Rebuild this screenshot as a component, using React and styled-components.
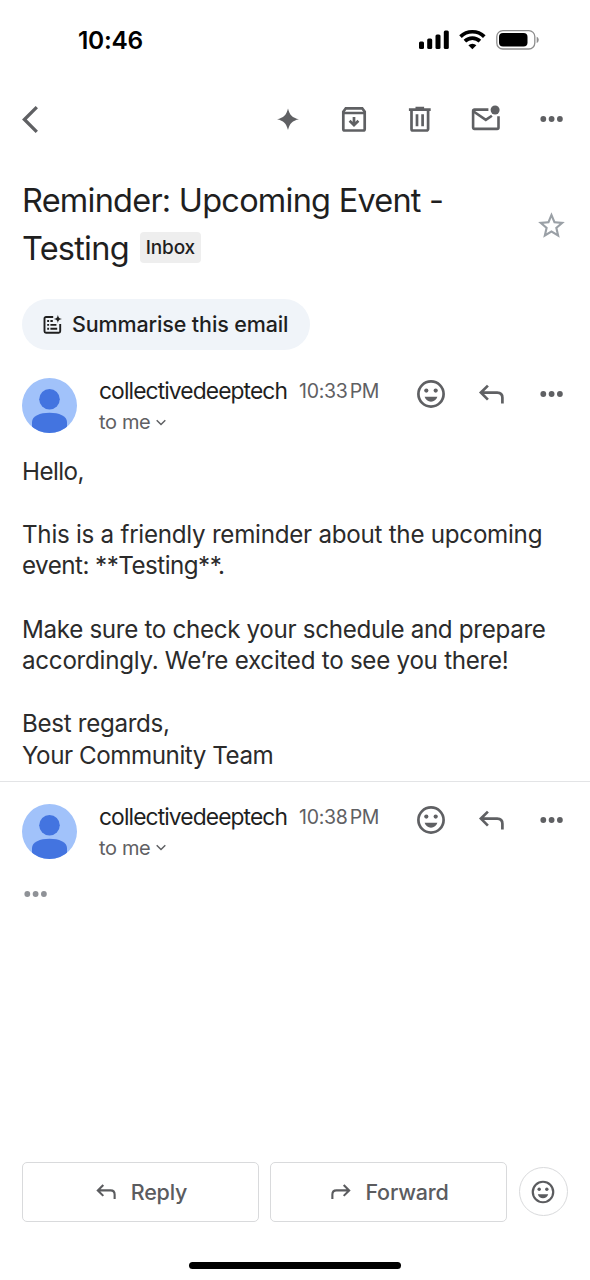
import styled, { createGlobalStyle } from "styled-components"

const GlobalStyle = createGlobalStyle`
    *, *::before, *::after {
        box-sizing: border-box;
    }
    body {
        margin: 0;
        background-color: #ffffff;
        font-family: Inter, "Liberation Sans", sans-serif;
    }
    svg {
        display: block;
        flex-shrink: 0;
    }
    p, h1 {
        margin: 0;
    }
`;
const Screen = styled.div`
    width: 590px;
    height: 1280px;
    display: flex;
    flex-direction: column;
    overflow: hidden;
    background-color: #ffffff;
    color: #1f1f1f;
`;
const StatusBar = styled.header`
    height: 80px;
    padding: 0 50px 0 78px;
    display: flex;
    align-items: center;
    justify-content: space-between;
`;
const Clock = styled.span`
    font-size: 24.5px;
    font-weight: 600;
    letter-spacing: -0.3px;
    color: #000000;
`;
const StatusIcons = styled.div`
    display: flex;
    align-items: center;
`;
const Toolbar = styled.nav`
    height: 78px;
    padding: 0 22px 0 14px;
    display: flex;
    align-items: center;
    justify-content: space-between;
`;
const ToolbarActions = styled.div`
    display: flex;
    gap: 34px;
`;
const IconButton = styled.button`
    width: 32px;
    height: 32px;
    padding: 0;
    border: none;
    background: none;
    color: ${(props) => props.$color || "#5f6063"};
    display: flex;
    align-items: center;
    justify-content: center;
`;
const SubjectRow = styled.div`
    margin-top: 19px;
    padding: 0 22px;
    height: 96px;
    display: flex;
    justify-content: space-between;
    align-items: center;
`;
const Subject = styled.h1`
    width: 450px;
    font-size: 32.5px;
    line-height: 48px;
    font-weight: 400;
    letter-spacing: -0.77px;
    color: #1f1f1f;
`;
const SubjectLine = styled.span`
    display: flex;
    align-items: center;
    white-space: nowrap;
`;
const Label = styled.span`
    height: 31px;
    margin: -3px 0 0 11px;
    padding: 0 6px;
    border-radius: 4px;
    background-color: #eeeeee;
    font-size: 19px;
    line-height: 31px;
    font-weight: 450;
    letter-spacing: -0.15px;
`;
const Chip = styled.button`
    width: 288px;
    height: 51px;
    margin: 26px 0 0 22px;
    padding: 0 0 1px 20px;
    border: none;
    border-radius: 26px;
    background-color: #f0f4f9;
    color: #1f1f1f;
    display: flex;
    align-items: center;
    gap: 9px;
    font-family: inherit;
    font-size: 21.5px;
    line-height: 26px;
    font-weight: 500;
    letter-spacing: -0.13px;
    white-space: nowrap;
`;
const MessageHeader = styled.div`
    height: 55px;
    margin-top: ${(props) => props.$top}px;
    padding: 0 22px;
    display: flex;
`;
const Sender = styled.div`
    width: 316px;
    margin-left: 22px;
`;
const SenderLine = styled.div`
    height: 28px;
    display: flex;
    align-items: center;
    gap: 12px;
    line-height: 27px;
    white-space: nowrap;
`;
const Name = styled.span`
    margin-top: -3px;
    font-size: 22.8px;
    letter-spacing: -0.9px;
`;
const Time = styled.span`
    margin-top: -1px;
    font-size: 19.5px;
    letter-spacing: -0.3px;
    word-spacing: -3px;
    color: #5f6063;
`;
const Recipient = styled.div`
    display: flex;
    align-items: center;
    gap: 5px;
    height: 33px;
    font-size: 20px;
    line-height: 33px;
    letter-spacing: -0.35px;
    color: #5f6063;
`;
const MessageActions = styled.div`
    display: flex;
    gap: 28.5px;
`;
const Body = styled.div`
    margin-top: 22.6px;
    padding: 0 22px;
    height: 325.4px;
    font-size: 24.2px;
    line-height: 31.6px;
    color: #2b2b2b;
`;
const Paragraph = styled.p`
    margin-bottom: 31.6px;
`;
const TextLine = styled.span`
    display: block;
    white-space: nowrap;
    letter-spacing: ${(props) => props.$spacing}px;
`;
const Divider = styled.hr`
    width: 100%;
    height: 1px;
    margin: 0;
    border: none;
    background-color: #e3e4e6;
`;
const QuotedToggle = styled.div`
    margin: 19px 0 0 20px;
    color: #8f9297;
`;
const Footer = styled.footer`
    height: 118px;
    margin-top: auto;
    padding: 0 22px;
    display: flex;
    align-items: flex-start;
    gap: 11px;
`;
const ActionButton = styled.button`
    width: 237px;
    height: 60px;
    padding: 0 0 1px;
    border: 1.5px solid #d9dadc;
    border-radius: 5px;
    background-color: #ffffff;
    color: #5b5c5f;
    display: flex;
    align-items: center;
    justify-content: center;
    gap: 12px;
    font-family: inherit;
    font-size: 21.5px;
    font-weight: 500;
    letter-spacing: -0.2px;
`;
const ReactButton = styled.button`
    width: 49px;
    height: 49px;
    margin: 5px 0 0 1px;
    padding: 0 1px 0 0;
    border: 1.5px solid #d9dadc;
    border-radius: 50%;
    background-color: #ffffff;
    color: #5b5c5f;
    display: flex;
    align-items: center;
    justify-content: center;
`;
const HomeArea = styled.div`
    height: 0;
    display: flex;
    justify-content: center;
    align-items: flex-end;
`;
const HomeBar = styled.div`
    width: 212px;
    height: 7px;
    margin-bottom: 11px;
    border-radius: 4px;
    background-color: #000000;
`;

function Dots() {
  return (
    <svg width="32" height="32" viewBox="0 0 32 32" fill="currentColor">
        <circle cx="7.3" cy="16" r="2.9" />
        <circle cx="15.6" cy="16" r="2.9" />
        <circle cx="23.9" cy="16" r="2.9" />
    </svg>
  )
}

function Smile({ size = 32 }) {
  return (
    <svg width={size} height={size} viewBox="0 0 32 32" fill="currentColor">
        <circle cx="16" cy="16" r="12.6" fill="none" stroke="currentColor" strokeWidth="2.7" />
        <circle cx="11.3" cy="12.6" r="2.1" />
        <circle cx="20.7" cy="12.6" r="2.1" />
        <path d="M9.6 18.8h12.800c-.9 3-3.400 4.900-6.400 4.900s-5.500-1.900-6.400-4.900z" />
    </svg>
  )
}

function ReplyArrow({ size = 32, flip }) {
  return (
    <svg width={size} height={size} viewBox="0 0 32 32" fill="none" stroke="currentColor" strokeWidth="2.7">
        <g transform={flip ? "translate(32 0) scale(-1 1)" : undefined}>
            <path d="M11.900 7.600L4.900 14.600l7 7M5.500 14.600H21.200q5.200 0 5.200 5.200v5.800" />
        </g>
    </svg>
  )
}

function Avatar() {
  return (
    <svg width="55" height="55" viewBox="0 0 55 55">
        <clipPath id="avatarClip">
            <circle cx="27.500" cy="27.500" r="27.500" />
        </clipPath>
        <g clipPath="url(#avatarClip)">
            <rect width="55" height="55" fill="#a1c2fa" />
            <circle cx="27.500" cy="21.300" r="10.300" fill="#4374e0" />
            <path d="M10 60V44c0-6 8-9.300 17.500-9.300S45 38 45 44v16z" fill="#4374e0" />
        </g>
    </svg>
  )
}

function Message({ top, time }) {
  return (
    <MessageHeader $top={top}>
        <Avatar />
        <Sender>
            <SenderLine>
                <Name>collectivedeeptech</Name>
                <Time>{time}</Time>
            </SenderLine>
            <Recipient>
                to me
                <svg width="12" height="12" viewBox="0 0 12 12" fill="none" stroke="currentColor" strokeWidth="1.500">
                    <path d="M1.700 3.200L6 7.500l4.300-4.300" />
                </svg>
            </Recipient>
        </Sender>
        <MessageActions>
            <IconButton aria-label="React"><Smile /></IconButton>
            <IconButton aria-label="Reply"><ReplyArrow /></IconButton>
            <IconButton aria-label="More"><Dots /></IconButton>
        </MessageActions>
    </MessageHeader>
  )
}

export default function App() {
  return (
    <>
      <GlobalStyle />
      <Screen>
        <StatusBar>
            <Clock>10:46</Clock>
            <StatusIcons>
                <svg width="121" height="24" viewBox="0 0 121 24">
                    <rect x="0" y="13.500" width="5" height="7.500" rx="1.500" />
                    <rect x="8.200" y="10.500" width="5" height="10.500" rx="1.500" />
                    <rect x="16.500" y="6.500" width="5" height="14.500" rx="1.500" />
                    <rect x="24.800" y="2.500" width="5" height="18.500" rx="1.500" />
                    <g fill="none" stroke="#000000" strokeWidth="3.700">
                        <path d="M41.500 8.600a17 17 0 0 1 23.800 0" />
                        <path d="M45.900 13.200a10.800 10.800 0 0 1 15 0" />
                    </g>
                    <path d="M53.400 21.300l-4-4.100a6 6 0 0 1 8 0z" />
                    <rect x="77.800" y="2.600" width="38" height="18.400" rx="6" fill="none" stroke="#8e8e8e" strokeWidth="1.300" />
                    <rect x="80" y="5" width="28.500" height="13.600" rx="4" />
                    <path d="M117.700 8.700c2.700 1 2.700 5.200 0 6.200z" fill="#8e8e8e" />
                </svg>
            </StatusIcons>
        </StatusBar>
        <Toolbar>
            <IconButton aria-label="Back">
                <svg width="32" height="32" viewBox="0 0 32 32" fill="none" stroke="currentColor" strokeWidth="3.300">
                    <path d="M22.800 4.200L10.400 16.500l12.400 12.300" />
                </svg>
            </IconButton>
            <ToolbarActions>
                <IconButton aria-label="Gemini">
                    <svg width="32" height="32" viewBox="0 0 32 32" fill="currentColor">
                        <path d="M16 5.500c1.700 6.600 4.300 9.200 11 10.800C20.300 17.800 17.700 20.400 16 27 14.300 20.400 11.700 17.800 5 16.300 11.700 14.700 14.300 12.100 16 5.500z" />
                    </svg>
                </IconButton>
                <IconButton aria-label="Archive">
                    <svg width="32" height="32" viewBox="0 0 32 32" fill="none" stroke="currentColor" strokeWidth="2.700">
                        <path d="M5.300 8.700L7.800 5.300h16.400l2.500 3.400v17.300a1.500 1.500 0 0 1-1.500 1.500H6.800a1.500 1.500 0 0 1-1.500-1.500z" />
                        <path d="M5.300 10h21.400M16 14.100v8M11.600 17.800l4.400 4.400 4.400-4.400" />
                    </svg>
                </IconButton>
                <IconButton aria-label="Delete">
                    <svg width="32" height="32" viewBox="0 0 32 32" fill="none" stroke="currentColor" strokeWidth="2.700">
                        <path d="M4.900 6.700h21.800M11.500 5.200h8.600" />
                        <path d="M7.500 7v19a1.500 1.500 0 0 0 1.500 1.500h13.600a1.500 1.500 0 0 0 1.500-1.500v-19M13 11.200v12M18.600 11.200v12" />
                    </svg>
                </IconButton>
                <IconButton aria-label="Mark unread">
                    <svg width="32" height="32" viewBox="0 0 32 32" fill="none" stroke="currentColor" strokeWidth="2.600">
                        <path d="M18.400 6.600H4.400a1.300 1.300 0 0 0-1.300 1.300v16.700a1.300 1.300 0 0 0 1.300 1.300h22.800a1.300 1.300 0 0 0 1.300-1.300V13.300" />
                        <path d="M3.600 8.500l12.200 8.400 6.100-4.200" />
                        <circle cx="25.100" cy="7" r="4.500" fill="currentColor" stroke="none" />
                    </svg>
                </IconButton>
                <IconButton aria-label="More"><Dots /></IconButton>
            </ToolbarActions>
        </Toolbar>
        <SubjectRow>
            <Subject>
                <SubjectLine>Reminder: Upcoming Event -</SubjectLine>
                <SubjectLine>Testing <Label>Inbox</Label></SubjectLine>
            </Subject>
            <IconButton aria-label="Star" $color="#9aa0a6">
                <svg width="32" height="32" viewBox="0.400 -0.500 24 24" fill="currentColor">
                    <path d="M22 9.240l-7.190-.62L12 2 9.190 8.630 2 9.240l5.460 4.730L5.820 21 12 17.270 18.180 21l-1.630-7.030L22 9.240zM12 15.400l-3.760 2.270 1-4.280-3.320-2.880 4.380-.38L12 6.100l1.710 4.040 4.380.38-3.320 2.880 1 4.280L12 15.400z" />
                </svg>
            </IconButton>
        </SubjectRow>
        <Chip>
            <svg width="21" height="21" viewBox="0 0 21 21" fill="none" stroke="currentColor" strokeWidth="1.900">
                <path d="M11.200 3H4a1.500 1.500 0 0 0-1.500 1.500v12.700a1.500 1.500 0 0 0 1.500 1.500h12.700a1.500 1.500 0 0 0 1.500-1.500V10" />
                <path d="M5.200 7h1.900M5.200 10.900h1.900M5.200 14.800h1.900M8.400 7h2.400M8.400 10.900h6M8.400 14.800h6.800" />
                <path d="M15.900.8c.5 3 1.300 3.700 4.100 4.200-2.800.5-3.600 1.200-4.100 4.200-.5-3-1.300-3.700-4.100-4.200 2.800-.5 3.600-1.200 4.100-4.200z" fill="currentColor" stroke="none" />
            </svg>
            Summarise this email
        </Chip>
        <Message top={28} time="10:33 PM" />
        <Body>
            <Paragraph><TextLine $spacing={-0.55}>Hello,</TextLine></Paragraph>
            <Paragraph>
                <TextLine $spacing={-0.27}>This is a friendly reminder about the upcoming</TextLine>
                <TextLine $spacing={-0.53}>event: **Testing**.</TextLine>
            </Paragraph>
            <Paragraph>
                <TextLine $spacing={-0.33}>Make sure to check your schedule and prepare</TextLine>
                <TextLine $spacing={-0.28}>accordingly. We’re excited to see you there!</TextLine>
            </Paragraph>
            <Paragraph>
                <TextLine $spacing={-0.33}>Best regards,</TextLine>
                <TextLine $spacing={-0.45}>Your Community Team</TextLine>
            </Paragraph>
        </Body>
        <Divider />
        <Message top={22} time="10:38 PM" />
        <QuotedToggle><Dots /></QuotedToggle>
        <Footer>
            <ActionButton>
                <ReplyArrow size={25} />
                Reply
            </ActionButton>
            <ActionButton>
                <ReplyArrow size={25} flip />
                Forward
            </ActionButton>
            <ReactButton aria-label="React"><Smile size={26} /></ReactButton>
        </Footer>
        <HomeArea><HomeBar /></HomeArea>
      </Screen>
    </>
  )
}
